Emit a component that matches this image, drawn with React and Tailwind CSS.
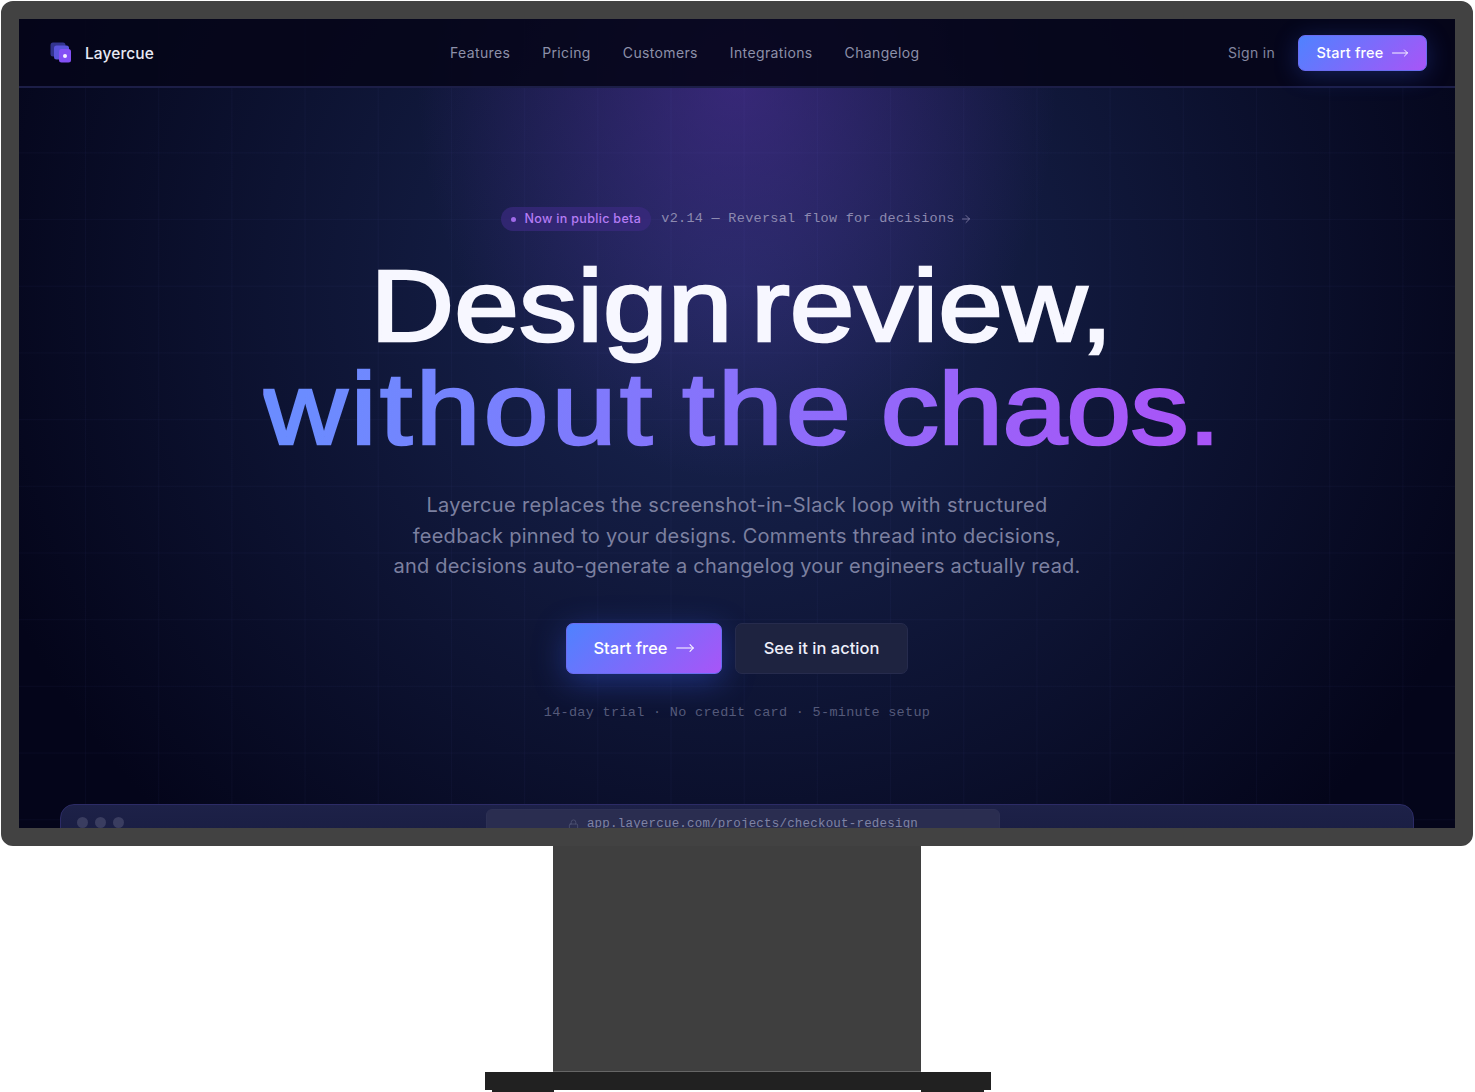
import { ArrowRight, Lock, MoveRight } from "lucide-react";

const navLinks = ["Features", "Pricing", "Customers", "Integrations", "Changelog"];

function Logo() {
  return (
    <svg width="22" height="22" viewBox="0 0 22 22" fill="none">
      <rect x="0.5" y="0.5" width="15" height="14" rx="2.5" fill="#33358f" />
      <rect x="4" y="3.5" width="15" height="14" rx="2.5" fill="#5a55dc" />
      <rect x="9" y="7" width="12" height="13.5" rx="2.5" fill="#8350f5" />
      <circle cx="15" cy="14" r="2" fill="#f5f0ff" />
    </svg>
  );
}

function Nav() {
  return (
    <div className="relative flex h-[69px] shrink-0 items-center border-b-2 border-[#1c1e47] bg-[#05061a]/90 pt-[1px] pr-[28px] pl-[31px]">
      <div className="flex w-[400px] items-center gap-[13px]">
        <Logo />
        <span className="pt-[1px] text-[15.5px] font-medium tracking-[0.1px] text-[#e8e9f5]">Layercue</span>
      </div>
      <div className="-mt-[1px] flex items-center gap-[32px] text-[14px] tracking-[0.36px] text-[#8d90a9]">
        {navLinks.map((link) => (
          <span key={link}>{link}</span>
        ))}
      </div>
      <div className="ml-auto flex items-center gap-[23px]">
        <span className="-mt-[1px] text-[14px] tracking-[0.3px] text-[#8487a0]">Sign in</span>
        <button className="flex h-[36px] w-[129px] items-center justify-center gap-[7px] rounded-[7px] border border-[#6a6cf0] bg-[linear-gradient(135deg,#4f82ff,#a855f7)] text-[14.5px] font-medium tracking-[0.2px] text-white shadow-[0_4px_24px_rgba(60,100,255,0.28)]">
          Start free
          <MoveRight size={18} strokeWidth={1.25} />
        </button>
      </div>
    </div>
  );
}

function Badge() {
  return (
    <div className="flex items-center gap-[10px]">
      <div className="flex h-[24px] w-[150px] items-center justify-center gap-[8px] rounded-full bg-[#3a2a80]/70 text-[12.5px] font-medium tracking-[0.33px] text-[#b57cf5]">
        <span className="h-[5px] w-[5px] rounded-full bg-[#a06ae8]" />
        Now in public beta
      </div>
      <span className="flex items-center gap-[5px] font-['Liberation_Mono',monospace] text-[13.5px] tracking-[0.28px] text-[#8d8ab0]">
        v2.14 — Reversal flow for decisions
        <ArrowRight size={12} strokeWidth={1.5} />
      </span>
    </div>
  );
}

function Hero() {
  return (
    <div className="flex flex-col items-center pt-[119px]">
      <div className="-ml-[1px]">
        <Badge />
      </div>
      <h1 className="mt-[24px] translate-x-[5px] scale-x-[1.14] text-center font-['Liberation_Sans',sans-serif] text-[102px] leading-[102px] font-normal text-[#f7f7ff] [-webkit-text-stroke:2.6px]">
        <span className="block tracking-[0px] [word-spacing:-12px]">Design review,</span>
        <span className="mt-[1px] block bg-[linear-gradient(100deg,#6b8cff_5%,#a855f7_95%)] bg-clip-text tracking-[3px] text-transparent [word-spacing:-8px]">
          without the <span className="tracking-[-0.5px]">chaos.</span>
        </span>
      </h1>
      <p className="mt-[30px] text-center text-[20px] leading-[30.5px] text-[#7c80a0]">
        <span className="tracking-[0.33px]">Layercue replaces the screenshot-in-Slack loop with structured</span>
        <br />
        <span className="tracking-[0.26px]">feedback pinned to your designs. Comments thread into decisions,</span>
        <br />
        <span className="tracking-[0.2px]">and decisions auto-generate a changelog your engineers actually read.</span>
      </p>
      <div className="mt-[41px] flex gap-[13px]">
        <button className="flex h-[51px] w-[156px] items-center justify-center gap-[7px] rounded-[7px] border border-[#6a6cf0] bg-[linear-gradient(135deg,#4f82ff,#a855f7)] text-[16.5px] font-medium text-white shadow-[0_8px_32px_rgba(60,100,255,0.35)]">
          Start free
          <MoveRight size={20} strokeWidth={1.25} />
        </button>
        <button className="h-[51px] w-[173px] rounded-[7px] border border-[#262b4d] bg-[#1e2340] text-[16.5px] font-medium text-[#eeeffa]">
          See it in action
        </button>
      </div>
      <div className="mt-[29px] font-['Liberation_Mono',monospace] text-[13.5px] tracking-[0.3px] text-[#555a7a]">
        14-day trial · No credit card · 5-minute setup
      </div>
    </div>
  );
}

function AppPreview() {
  return (
    <div className="absolute top-[785px] right-[41px] left-[41px] h-[60px] rounded-t-[14px] border border-[#2c2b66] bg-[linear-gradient(180deg,#1d2148,#171b3e)]">
      <div className="flex h-full items-start pt-[12px] pl-[16px]">
        <div className="flex gap-[7px]">
          <span className="h-[11px] w-[11px] rounded-full bg-[#3a3d60]" />
          <span className="h-[11px] w-[11px] rounded-full bg-[#3a3d60]" />
          <span className="h-[11px] w-[11px] rounded-full bg-[#3a3d60]" />
        </div>
      </div>
      <div className="absolute top-[4px] left-[425px] flex h-[40px] w-[514px] justify-center gap-[8px] rounded-t-[6px] border border-[#2d3054] bg-[#2a2d50] pt-[5px] font-['Liberation_Mono',monospace] text-[12.5px] tracking-[0.2px] text-[#7f83a4]">
        <Lock size={11} strokeWidth={1.5} className="mt-[4px] text-[#565a7a]" />
        app.layercue.com/projects/checkout-redesign
      </div>
    </div>
  );
}

function Screen() {
  return (
    <div className="relative h-[809px] w-[1436px] overflow-hidden bg-[#04051a] font-['Inter',sans-serif]">
      <div className="absolute inset-0 bg-[radial-gradient(ellipse_320px_400px_at_50%_60px,rgba(90,50,170,0.5),transparent),radial-gradient(ellipse_800px_760px_at_50%_270px,rgba(30,45,95,0.85),transparent)]" />
      <div className="absolute inset-0 bg-[linear-gradient(rgba(130,140,255,0.035)_1px,transparent_1px),linear-gradient(90deg,rgba(130,140,255,0.035)_1px,transparent_1px)] bg-[size:73.2px_66.7px] bg-[position:66px_0px]" />
      <div className="relative">
        <Nav />
        <Hero />
      </div>
      <AppPreview />
    </div>
  );
}

function Stand() {
  return (
    <div className="flex flex-col items-center">
      <div className="h-[226px] w-[368px] border-b border-[#666] bg-[#3f3f3f]" />
      <div className="ml-[2px] h-[18px] w-[506px] bg-[#212121]" />
      <div className="ml-[2px] flex h-[2px] w-[492px] justify-between">
        <div className="w-[62px] bg-[#212121]" />
        <div className="w-[63px] bg-[#212121]" />
      </div>
    </div>
  );
}

export default function App() {
  return (
    <div className="flex h-[1092px] w-full flex-col items-center overflow-hidden bg-white pt-[1px] pr-[1px]">
      <div className="rounded-[12px] border-[18px] border-[#424242]">
        <Screen />
      </div>
      <Stand />
    </div>
  );
}
